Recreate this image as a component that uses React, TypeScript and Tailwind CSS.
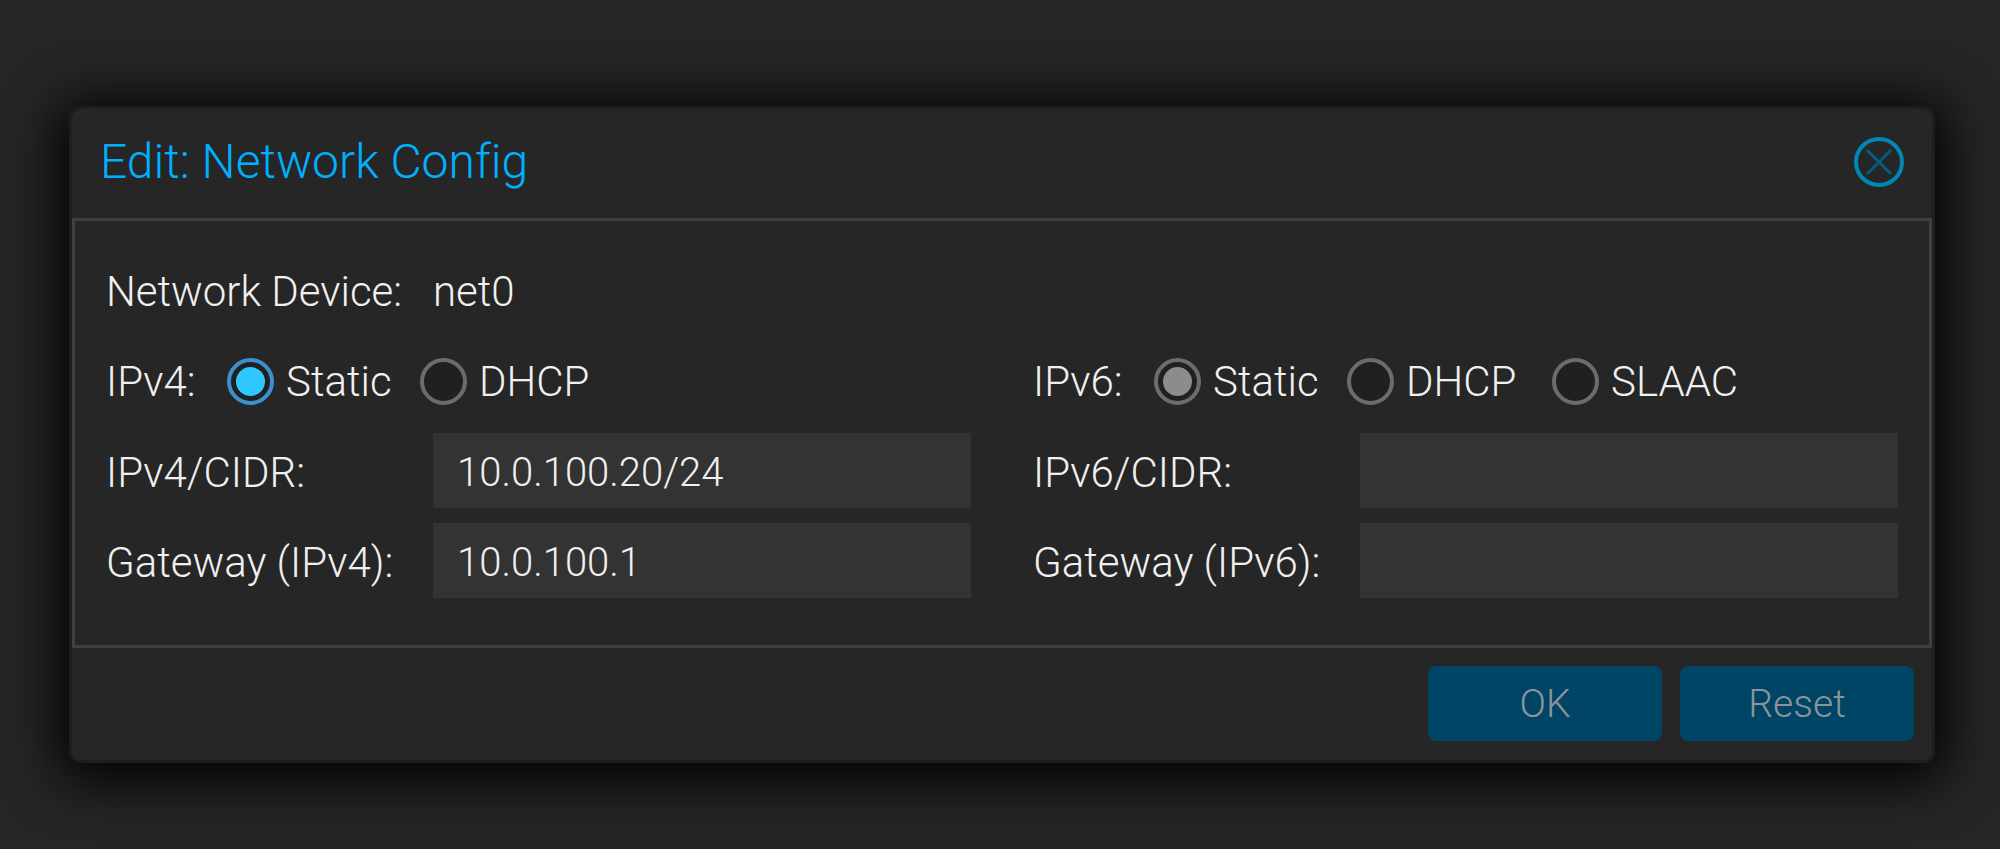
import { useState } from "react";

type RadioProps = {
  name: string;
  label: string;
  checked: boolean;
  muted?: boolean;
  className: string;
  onSelect: () => void;
};

function Radio({ name, label, checked, muted, className, onSelect }: RadioProps) {
  const active = checked && !muted;
  return (
    <label className={`flex items-center gap-3 ${className}`}>
      <span className="grid size-[47px] shrink-0 place-items-center">
        <input
          type="radio"
          name={name}
          checked={checked}
          onChange={onSelect}
          className={`col-start-1 row-start-1 size-[47px] appearance-none rounded-full border-4 bg-[#202020] ${
            active ? "border-[#3d90d0]" : "border-[#6c6c6c]"
          }`}
        />
        {checked && (
          <span
            className={`pointer-events-none col-start-1 row-start-1 size-[29px] rounded-full ${
              active ? "bg-[#2ec8ff]" : "bg-[#8c8c8c]"
            }`}
          />
        )}
      </span>
      {label}
    </label>
  );
}

type FieldProps = { id: string; label: string; initial?: string };

function Field({ id, label, initial = "" }: FieldProps) {
  const [value, setValue] = useState(initial);
  return (
    <div className="flex h-[75px] items-center">
      <label htmlFor={id} className="w-[327px] shrink-0 pt-1">
        {label}
      </label>
      <input
        id={id}
        type="text"
        value={value}
        onChange={(e) => setValue(e.target.value)}
        className="h-full w-full min-w-0 bg-[#333333] px-6 pt-1 text-[40px] outline-none"
      />
    </div>
  );
}

export default function App() {
  const [v4, setV4] = useState("Static");
  const [v6, setV6] = useState("Static");

  return (
    <main className="flex min-h-screen flex-col bg-[#262626] pt-[106px] pr-[65px] pb-[86px] pl-[69px] font-['Roboto',sans-serif] text-[42px] leading-[48px] font-light text-[#f0f0f0] [font-variant-ligatures:none]">
      <section
        role="dialog"
        aria-labelledby="dialog-title"
        className="rounded-xl border-3 border-[#1e1e1e] bg-[#262626] shadow-[0_7px_56px_11px_#000000]"
      >
        <header className="flex h-[109px] items-center justify-between px-7 pb-1">
          <h1 id="dialog-title" className="text-[48px] leading-[56px] text-[#00b0ff]">
            Edit: Network Config
          </h1>
          <button type="button" aria-label="Close" className="size-[50px]">
            <svg viewBox="0 0 50 50" className="size-full" fill="none">
              <circle cx="25" cy="25" r="23" stroke="#0087b5" strokeWidth="4" />
              <path d="M13 13L37 37M37 13L13 37" stroke="#006080" strokeWidth="3" />
            </svg>
          </button>
        </header>

        <form className="grid grid-cols-2 gap-x-[62px] gap-y-[15px] border-3 border-[#404040] px-[31px] pt-8 pb-[47px]">
          <div className="col-span-2 flex h-[75px] items-center pt-0.5">
            <span className="w-[327px] shrink-0">Network Device:</span>
            <span>net0</span>
          </div>

          <fieldset className="flex h-[75px] items-center pt-0.5">
            <span className="w-[121px] shrink-0">IPv4:</span>
            <Radio name="v4" label="Static" className="w-[193px]" checked={v4 === "Static"} onSelect={() => setV4("Static")} />
            <Radio name="v4" label="DHCP" className="w-[205px]" checked={v4 === "DHCP"} onSelect={() => setV4("DHCP")} />
          </fieldset>
          <fieldset className="flex h-[75px] items-center pt-0.5">
            <span className="w-[121px] shrink-0">IPv6:</span>
            <Radio name="v6" label="Static" className="w-[193px]" muted checked={v6 === "Static"} onSelect={() => setV6("Static")} />
            <Radio name="v6" label="DHCP" className="w-[205px]" checked={v6 === "DHCP"} onSelect={() => setV6("DHCP")} />
            <Radio name="v6" label="SLAAC" className="w-[205px]" checked={v6 === "SLAAC"} onSelect={() => setV6("SLAAC")} />
          </fieldset>

          <Field id="cidr4" label="IPv4/CIDR:" initial="10.0.100.20/24" />
          <Field id="cidr6" label="IPv6/CIDR:" />
          <Field id="gw4" label="Gateway (IPv4):" initial="10.0.100.1" />
          <Field id="gw6" label="Gateway (IPv6):" />
        </form>

        <footer className="flex justify-end gap-[18px] px-[18px] pt-[18px] pb-[19px] text-[39px] text-[#8c9499]">
          <button type="button" className="h-[75px] w-[234px] rounded-lg bg-[#004466]">
            OK
          </button>
          <button type="button" className="h-[75px] w-[234px] rounded-lg bg-[#004466]">
            Reset
          </button>
        </footer>
      </section>
    </main>
  );
}
